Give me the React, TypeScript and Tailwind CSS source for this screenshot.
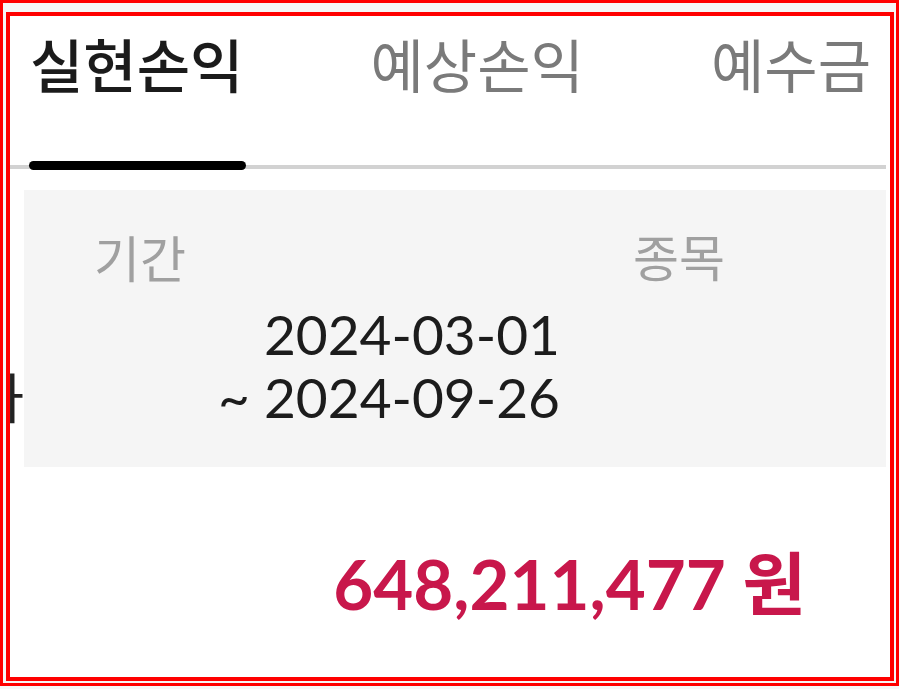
import React from "react";

const KR = "font-['Lato','Noto_Sans_CJK_KR',sans-serif]";

export default function App() {
  return (
    <div className={`w-[899px] h-[689px] bg-[#f7f7f7] ${KR}`}>
      <div className="h-[686px] border-[3px] border-[#ff0000] bg-[#f6f6f6] pt-[9px] pl-[3px] pr-[2px] pb-[2px]">
        <div className="h-full border-4 border-[#ff0000] bg-white flex flex-col">
          {/* Tabs */}
          <div className="relative pt-[11px]">
            <div className="flex justify-between pl-[20px] pr-[19px] font-['Noto_Sans_CJK_KR',sans-serif] text-[58px] leading-[72px]">
              <div className="text-[#1b1b1b] font-medium">실현손익</div>
              <div className="text-[#7a7a7a]">예상손익</div>
              <div className="text-[#7a7a7a]">예수금</div>
            </div>
            <div className="mt-[66px] mr-[4px] h-[4px] bg-[#d2d2d2]" />
            <div className="absolute left-[19px] bottom-[-1px] w-[217px] h-[9px] rounded-full bg-black" />
          </div>

          {/* Panel */}
          <div className="mt-[21px] flex h-[277px] mr-[4px]">
            <div className="w-[14px] overflow-hidden flex justify-end items-start pt-[176px] bg-white">
              <span className="text-[54px] leading-[60px] text-[#222] font-['Noto_Sans_CJK_KR',sans-serif]">하</span>
            </div>
            <div className="flex-1 flex bg-[#f5f5f5]">
              <div className="w-[566px] flex flex-col pl-[70px] pr-[30px] pt-[34px]">
                <div className="text-[50px] leading-[64px] text-[#a0a0a0] font-['Noto_Sans_CJK_KR',sans-serif]">
                  기간
                </div>
                <div className="mt-[15px] text-right text-[55px] leading-[63px] text-[#1c1c1c] font-['Lato',sans-serif]">
                  <div>2024-03-01</div>
                  <div>~ 2024-09-26</div>
                </div>
              </div>
              <div className="flex-1 pl-[43px] pt-[33px]">
                <div className="text-[50px] leading-[64px] text-[#a0a0a0] font-['Noto_Sans_CJK_KR',sans-serif]">
                  종목
                </div>
              </div>
            </div>
          </div>

          {/* Amount */}
          <div className="flex justify-end pr-[84px] pt-[77px]">
            <div className="text-[69px] leading-[80px] font-bold text-[#c8174b]">
              648,211,477 원
            </div>
          </div>
        </div>
      </div>
    </div>
  );
}
